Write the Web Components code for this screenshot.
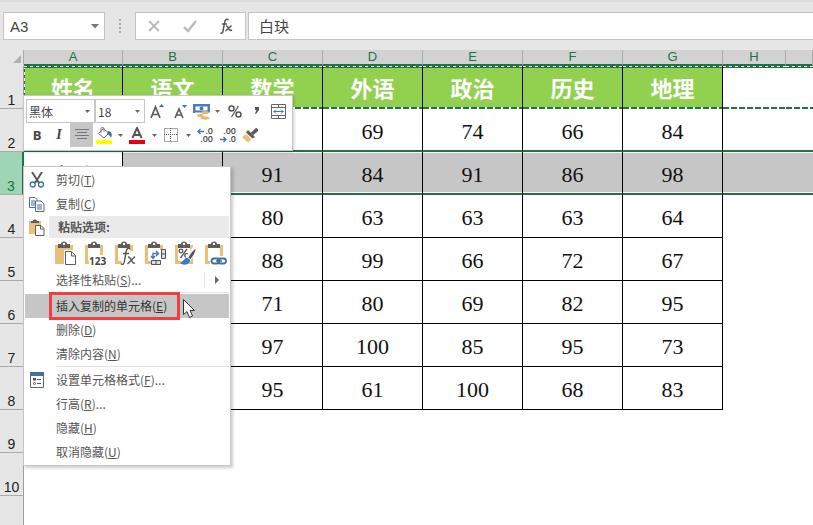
<!DOCTYPE html>
<html lang="zh-CN">
<head>
<meta charset="utf-8">
<title>成绩表</title>
<style>
  body { margin: 0; background: #fff; color: #222; font-family: "Liberation Sans", "Noto Sans CJK SC", sans-serif; }
</style>
</head>
<body>
<excel-window></excel-window>
<script>
const SVG = (w, h, body) => `<svg width="${w}" height="${h}" viewBox="0 0 ${w} ${h}" fill="none" aria-hidden="true">${body}</svg>`;
const BOARD = `<path d="M1 4h18v19H1z" fill="#e9bf7b"/><path d="M4 6h12v14H4z" fill="#fff"/><path d="M4 7V3h3c0-3.500 6-3.500 6 0h3v4z" fill="#5d5d5d"/><path d="M9 2h2v2H9z" fill="#fff"/>`;
const ICONS = {
  cross: SVG(14, 14, `<path d="M2 2l10 10M12 2L2 12" stroke="#b9b9b9" stroke-width="1.8"/>`),
  check: SVG(14, 14, `<path d="M1 8l4 4L13 2" stroke="#b9b9b9" stroke-width="2.2"/>`),
  fx: SVG(14, 18, `<path d="M8.500 3c-2-2-3.500 0-4 3L3 14c-.4 2-1 2.500-2.500 2M2 7h5" stroke="#555" stroke-width="1.500"/><path d="M6 9c3-1 2 6 6 4M11.500 8.500L5.500 14" stroke="#555" stroke-width="1.500"/>`),
  corner: SVG(8, 8, `<path d="M8 0v8H0z" fill="#b1b1b1"/>`),
  down: SVG(5, 3, `<path d="M0 0h5L2.500 3z" fill="#666"/>`),
  downBig: SVG(8, 5, `<path d="M0 0h8L4 4.500z" fill="#777"/>`),
  right: SVG(4, 8, `<path d="M0 0l4 4-4 4z" fill="#666"/>`),
  grow: SVG(14, 16, `<path d="M1 15L5.500 4 10 15M2.500 11.500h6" stroke="#5a5a5a" stroke-width="1.700"/><path d="M9 4l2.500-3L14 4z" fill="#3e6db5"/>`),
  shrink: SVG(13, 15, `<path d="M1 14l4-9 4 9M2.500 11h5" stroke="#5a5a5a" stroke-width="1.600"/><path d="M8 1h5l-2.500 3z" fill="#3e6db5"/>`),
  money: SVG(17, 17, `<path d="M0 1h17v9H0z" fill="#4a7ebb"/><path d="M2.500 3.500h12v4h-12z" fill="#fff"/><circle cx="8.500" cy="5.500" r="2" fill="#4a7ebb"/><path d="M2 9.500h15V17H2z" fill="#fff"/><g fill="#e9b973"><ellipse cx="12" cy="9.500" rx="4" ry="1.500"/><ellipse cx="7.500" cy="12.500" rx="3.500" ry="1.500"/><ellipse cx="12" cy="15" rx="4.500" ry="1.700"/></g>`),
  percent: SVG(14, 13, `<circle cx="3.500" cy="3.500" r="2.500" stroke="#555" stroke-width="1.500"/><circle cx="10.500" cy="9.500" r="2.500" stroke="#555" stroke-width="1.500"/><path d="M10.500 1l-7 11" stroke="#555" stroke-width="1.300"/>`),
  comma: SVG(6, 10, `<path d="M1 1h4v3L2 8l-1-.5L2.500 4H1z" fill="#555"/>`),
  merge: SVG(15, 15, `<path d="M.5.500h14v14H.5zM.5 3.500h14M.5 11.500h14M7.500.500v3M7.500 11.500v3" stroke="#666"/><path d="M2.500 7.500h10M5 5.500l-2 2 2 2M10 5.500l2 2-2 2" stroke="#3e7ab8"/>`),
  align: SVG(14, 12, `<path d="M0 .5h14M2 3.500h10M0 6.500h14M2 9.500h10" stroke="#777"/>`),
  bucket: SVG(17, 17, `<path d="M0 13h16v4H0z" fill="#ff0"/><path d="M7 2L2.500 6.500 8 11l5-5L7 1.500z" fill="#fff" stroke="#6b6b6b"/><path d="M5 6V1.500c0-1.500 3-1.500 3 0V5" stroke="#9c6b5c"/><path d="M12 4c4 0 4.500 4 3 7-1-2-2-3.500-4-4z" fill="#41719c"/>`),
  fontColor: SVG(16, 17, `<path d="M0 13h16v4H0z" fill="#e60012"/><path d="M3.500 11L8 1l4.500 10M5 8h6" stroke="#555" stroke-width="2"/>`),
  borders: SVG(14, 14, `<path d="M.5.500h13v13H.5zM6.500 0v14M0 6.500h14" stroke="#555" stroke-dasharray="1 1"/>`),
  decMore: SVG(16, 16, `<path d="M1 4.500h6M3.500 2L1 4.500 3.500 7" stroke="#3e7ab8" stroke-width="1.400"/>`),
  arrowLeft: SVG(7, 7, `<path d="M1 3.500h6M3.500 1L1 3.500 3.500 6" stroke="#3e7ab8" stroke-width="1.400"/>`),
  arrowRight: SVG(7, 7, `<path d="M0 3.500h6M3.500 1L6 3.500 3.500 6" stroke="#3e7ab8" stroke-width="1.400"/>`),
  painter: SVG(16, 15, `<path d="M15.500 1L10 6" stroke="#5a5a5a" stroke-width="3.500"/><path d="M6 2l7 7-2.500 1.500L4 4.500z" fill="#5a5a5a"/><path d="M4 6l5.500 5L6 14.500 0 9z" fill="#e9bf7b"/>`),
  cut: SVG(16, 17, `<path d="M3 0l7 11M13 0L6 11" stroke="#5a5a5a" stroke-width="2"/><circle cx="3.700" cy="12.500" r="2.500" stroke="#3e6f9f" stroke-width="1.300"/><circle cx="12" cy="12.500" r="2.500" stroke="#3e6f9f" stroke-width="1.300"/>`),
  copy: SVG(16, 15, `<path d="M.5.500H6l2 2v8H.5z" fill="#fff" stroke="#5a6b7c"/><path d="M2 4h4M2 6h4M2 8h4" stroke="#41719c"/><path d="M6.500 4H12l3 3v7.500H6.500z" fill="#fff" stroke="#5a6b7c"/><path d="M8 8h5M8 10h5M8 12h5" stroke="#41719c"/>`),
  paste: SVG(16, 17, `<path d="M0 2h12v13H0z" fill="#e9bf7b"/><path d="M2 4V2h2c0-2 4-2 4 0h2v2z" fill="#5d5d5d"/><path d="M6.500 6.500H12l3 3v7H6.500z" fill="#fff" stroke="#5d5d5d"/><path d="M11.500 7v3H15" stroke="#5d5d5d"/>`),
  format: SVG(15, 16, `<path d="M.5.500h13v15H.5z" fill="#fff" stroke="#55697d"/><path d="M0 0h14v4H0z" fill="#41719c"/><path d="M3 6h3v2.500H3z" fill="#555"/><path d="M7 7.500h4M7 11.500h4" stroke="#555"/><circle cx="4.500" cy="11.500" r="1" stroke="#555"/>`),
  pAll: SVG(24, 26, `<path d="M1 4h18v19H1z" fill="#e9bf7b"/><path d="M4 7V3h3c0-3.500 6-3.500 6 0h3v4z" fill="#5d5d5d"/><path d="M9 2h2v2H9z" fill="#fff"/><path d="M11.500 10.500h6l4 4v9h-10z" fill="#fff" stroke="#fff" stroke-width="3"/><path d="M11.500 10.500h6l4 4v9h-10z" fill="#fff" stroke="#5d5d5d"/><path d="M17.500 11v4H22" stroke="#5d5d5d"/>`),
  pValues: SVG(24, 26, BOARD + `<path d="M5 14h19v11H5z" fill="#fff"/><text x="5" y="24" font-family="Open Sans, sans-serif" font-size="10" font-weight="700" fill="#444">123</text>`),
  pFormula: SVG(24, 26, BOARD + `<path d="M8 10h16v15H8z" fill="#fff"/><path d="M16 8c-2-2-3.500 0-4 3l-1.500 9c-.5 3-1.500 4-3.500 3M9 12.500h6" stroke="#555" stroke-width="1.400"/><path d="M14 16c3.500-1 3 7.500 7 6M21 15.500L13.500 23" stroke="#555" stroke-width="1.400"/>`),
  pTranspose: SVG(24, 26, BOARD + `<path d="M7 9h16v15H7z" fill="#fff"/><path d="M17.500 8.500h4v9h-4zM17.500 13h4" fill="#ddd" stroke="#555"/><path d="M7.500 19.500h9v4h-9zM12 19.500v4" fill="#ddd" stroke="#555"/><path d="M9 17v-4.500h5M7 15l2 2.500 2-2.500M12 10l2.500 2.500L12 15" stroke="#3e7ab8" stroke-width="1.400"/>`),
  pFormat: SVG(24, 26, BOARD + `<circle cx="7" cy="10" r="1.800" stroke="#555" stroke-width="1.300"/><circle cx="12.500" cy="14.500" r="1.800" stroke="#555" stroke-width="1.300"/><path d="M13 8L6.500 17" stroke="#555" stroke-width="1.300"/><path d="M21 8l-7 10" stroke="#fff" stroke-width="6"/><path d="M21.500 8c-2 1-7 7-7 9l2 1c2-2 5-7 5-10z" fill="#555"/><path d="M14 17c-4-1-4 4-8 5 3 3 10 2 10-3z" fill="#3e7ab8"/>`),
  pLink: SVG(24, 26, BOARD + `<path d="M6 15h18v10H6z" fill="#fff"/><rect x="7.500" y="17.500" width="8" height="5" rx="2.500" stroke="#3e6f9f" stroke-width="1.800"/><rect x="14" y="17.500" width="8" height="5" rx="2.500" stroke="#3e6f9f" stroke-width="1.800"/><path d="M12 20h6" stroke="#3e6f9f" stroke-width="1.500"/>`),
  pointer: SVG(14, 21, `<path d="M1.500 1.500v15l3.500-3 2.500 6 3-1.500-2.500-5.500h4.500z" fill="#fff" stroke="#333"/>`)
};

const define = (name, html, setup) => customElements.define(name, class extends HTMLElement {
  constructor() {
    super();
    const t = document.createElement("template");
    t.innerHTML = html;
    this.attachShadow({ mode: "open" }).append(t.content.cloneNode(true));
  }
  connectedCallback() { if (setup) setup(this, this.shadowRoot); }
});

define("ui-icon", `<style>:host{display:inline-flex;flex:none}svg{display:block}</style><span></span>`,
  (el, root) => { root.querySelector("span").innerHTML = ICONS[el.getAttribute("name")]; });

define("formula-bar", `<style>
  :host{display:flex;align-items:stretch;box-sizing:border-box;height:50px;padding:12px 0 10px 3px;background:#e6e6e6;box-shadow:inset 0 2px #dcdcdc}
  .box{display:flex;align-items:center;box-sizing:border-box;background:#fff;border:1px solid #c4c4c4}
  input{min-width:0;flex:1;border:0;outline:0;padding:0 6px;background:none;font:15px "Noto Sans CJK SC",sans-serif;color:#444}
  button{display:flex;align-items:center;justify-content:center;border:0;background:none;padding:0}
  .name{width:102px}.name input{font:15px "Liberation Sans",sans-serif}.name button{width:18px}
  .dots{display:flex;flex-direction:column;justify-content:center;gap:2px;width:30px;align-items:center}
  .dots i{width:2px;height:2px;background:#aaa}
  .acts{width:111px;justify-content:space-around}.acts button{width:36px;height:100%}
  .value{flex:1;margin-left:2px;border-right:0}.value input{padding:0 10px;font-size:15px;line-height:20px;height:24px;margin-bottom:2px}
</style>
<div class="box name"><input aria-label="名称框" value="A3"><button aria-label="展开名称"><ui-icon name="downBig"></ui-icon></button></div>
<div class="dots"><i></i><i></i><i></i><i></i></div>
<div class="box acts"><button aria-label="取消"><ui-icon name="cross"></ui-icon></button><button aria-label="输入"><ui-icon name="check"></ui-icon></button><button aria-label="插入函数"><ui-icon name="fx"></ui-icon></button></div>
<div class="box value"><input aria-label="编辑栏" value="白玦"></div>`);

define("sheet-grid", `<style>
  :host{display:flex;flex-direction:column;flex:1;overflow:hidden}
  table{width:100%;table-layout:fixed;border-collapse:separate;border-spacing:0}
  .rowhead{width:24px}.first{width:99px}.col{width:100px}.narrow{width:63px}
  th,td{box-sizing:border-box;padding:0;font-weight:400}
  thead th{height:16px;background:#d2d2d2;border-right:1px solid #ababab;border-bottom:2px solid #217346;color:#217346;font:13px/14px "Liberation Sans",sans-serif}
  thead th:first-child{background:#e6e6e6;border-bottom-color:#e6e6e6}
  thead ui-icon{float:right;margin:4px 2px 0 0}
  tbody th{height:43px;vertical-align:bottom;background:#e6e6e6;border-right:1px solid #9c9c9c;border-bottom:1px solid #ababab;color:#222;font:14px/16px "Liberation Sans",sans-serif}
  td{text-align:center;vertical-align:middle;font:22px/24px "Liberation Serif","Noto Sans CJK SC",serif;color:#111}
  td.cell{border-right:1px solid #000;border-bottom:1px solid #000;padding-top:4px}
  .title td{--side:linear-gradient(#0000,#0000);border-bottom:0;background:repeating-linear-gradient(90deg,#fff 0 3px,#217346 3px 6px) top/100% 1px no-repeat,linear-gradient(#217346,#217346) 0 1px/100% 1px no-repeat,repeating-linear-gradient(90deg,#217346 0 6px,#fff 6px 8px) bottom/100% 2px no-repeat,var(--side) left/1px 100% no-repeat}
  .title td.cell{border-bottom:0;background-color:#92d050;color:#fff;font-weight:700;font-family:"Noto Sans CJK SC",sans-serif;padding:0 0 2px}
  .title td:nth-child(2){--side:repeating-linear-gradient(#fff 0 3px,#217346 3px 6px)}
  .title th{border-bottom-color:#ababab}
  .before td,.before td.cell{border-bottom:2px solid #217346}
  .active th{background:#9fd5b7;color:#217346;border-right:2px solid #217346}
  .active td,.active td.cell{background:linear-gradient(#fff,#fff) top/100% 1px no-repeat,linear-gradient(#fff,#fff) bottom/100% 1px no-repeat #c6c6c6;background-clip:padding-box;background-origin:padding-box;border-bottom:2px solid #217346}
  .active td.current{background:#fff;padding-top:8px}
  .rest{flex:1;width:23px;background:#e6e6e6;border-right:1px solid #9c9c9c}
</style><table><colgroup><col class="rowhead"><col class="first"><col class="col"><col class="col"><col class="col"><col class="col"><col class="col"><col class="col"><col class="narrow"><col></colgroup>
<thead><tr><th><ui-icon name="corner"></ui-icon></th><th>A</th><th>B</th><th>C</th><th>D</th><th>E</th><th>F</th><th>G</th><th>H</th><th></th></tr></thead><tbody></tbody></table><div class="rest"></div>`,
(el, root) => {
  const rows = [["姓名","语文","数学","外语","政治","历史","地理"],["","","",69,74,66,84],["白玦","",91,84,91,86,98],["","",80,63,63,63,64],["","",88,99,66,72,67],["","",71,80,69,82,95],["","",97,100,85,95,73],["","",95,61,100,68,83],[],[]];
  const kinds = ["title", "before", "active"];
  root.querySelector("tbody").innerHTML = rows.map((r, i) => `<tr class="${kinds[i] || ""}"><th>${i + 1}</th>` +
    Array.from({ length: 9 }, (_, c) => `<td class="${c < r.length ? "cell" : ""}${i === 2 && c === 0 ? " current" : ""}">${r[c] ?? ""}</td>`).join("") + "</tr>").join("");
});

define("tool-button", `<style>:host{display:flex;height:24px}button{display:flex;align-items:center;justify-content:center;width:100%;border:0;padding:0;background:none;color:#444;font:bold 13px/14px "Open Sans",sans-serif}:host([pressed]) button{background:#c6c6c6}</style><button><slot></slot></button>`,
(el, root) => root.querySelector("button").setAttribute("aria-label", el.getAttribute("label")));

define("mini-toolbar", `<style>
  :host{display:block;box-sizing:border-box;width:270px;padding:3px 2px;background:#fff;border:1px solid #c6c6c6;box-shadow:1px 1px 3px #0003}
  .row{display:grid;align-items:center;height:24px}
  .one{grid-template-columns:69px 50px 24px 22px 20px 12px 24px 20px 22px}
  .two{grid-template-columns:22px 22px 23px 22px 10px 24px 10px 24px 10px 24px 22px 22px}
  label{position:relative;display:flex;align-items:center}
  select{appearance:none;width:100%;height:24px;border:1px solid #c6c6c6;border-radius:0;background:#fff;padding:0 2px;color:#444;font:12px "Noto Sans CJK SC",sans-serif}
  label ui-icon{position:absolute;right:5px}
  i{font-family:"Liberation Serif",serif;font-size:14px}
  .dec{display:grid;grid-template-columns:8px 8px;align-items:center;font:600 9px/8px "Open Sans",sans-serif;text-align:right}.wide{grid-column:span 2}
</style>
<div class="row one"><label><select aria-label="字体"><option>黑体</option></select><ui-icon name="down"></ui-icon></label><label><select aria-label="字号"><option>18</option></select><ui-icon name="down"></ui-icon></label>
<tool-button label="增大字号"><ui-icon name="grow"></ui-icon></tool-button><tool-button label="减小字号"><ui-icon name="shrink"></ui-icon></tool-button><tool-button label="会计数字格式"><ui-icon name="money"></ui-icon></tool-button><tool-button label="更多货币"><ui-icon name="down"></ui-icon></tool-button><tool-button label="百分比"><ui-icon name="percent"></ui-icon></tool-button><tool-button label="千位分隔"><ui-icon name="comma"></ui-icon></tool-button><tool-button label="合并后居中"><ui-icon name="merge"></ui-icon></tool-button></div>
<div class="row two"><tool-button label="加粗">B</tool-button><tool-button label="倾斜"><i>I</i></tool-button><tool-button pressed label="居中"><ui-icon name="align"></ui-icon></tool-button><tool-button label="填充颜色"><ui-icon name="bucket"></ui-icon></tool-button><tool-button label="更多填充"><ui-icon name="down"></ui-icon></tool-button><tool-button label="字体颜色"><ui-icon name="fontColor"></ui-icon></tool-button><tool-button label="更多颜色"><ui-icon name="down"></ui-icon></tool-button><tool-button label="边框"><ui-icon name="borders"></ui-icon></tool-button><tool-button label="更多边框"><ui-icon name="down"></ui-icon></tool-button><tool-button label="增加小数位数"><span class="dec"><ui-icon name="arrowLeft"></ui-icon><span>.0</span><span class="wide">.00</span></span></tool-button><tool-button label="减少小数位数"><span class="dec"><span class="wide">.00</span><ui-icon name="arrowRight"></ui-icon><span>.0</span></span></tool-button><tool-button label="格式刷"><ui-icon name="painter"></ui-icon></tool-button></div>`);

define("menu-item", `<style>
  :host{display:block}
  button{display:grid;grid-template-columns:24px 1fr auto;align-items:center;width:100%;height:24px;padding:0;border:0;background:none;color:#555;text-align:left;font:12px/18px "Noto Sans CJK SC",sans-serif}
  .icon{display:flex;justify-content:center}
  .label{padding-left:7px}
  :host([hot]) button{background:#c6c6c6;color:#333}
  .more{display:none;align-items:center;height:14px;padding:0 10px;border-left:1px solid #e0e0e0}
  :host([submenu]) .more{display:flex}
</style><button role="menuitem"><span class="icon"><slot name="icon"></slot></span><span class="label"><slot></slot></span><span class="more"><ui-icon name="right"></ui-icon></span></button>`);

define("context-menu", `<style>
  :host{display:block;box-sizing:border-box;width:208px;padding:1px;background:#fff;border:1px solid #c6c6c6;box-shadow:2px 2px 3px #0003}
  hr{height:1px;border:0;background:#e0e0e0;margin:0 0 1px 31px}
  .head{display:grid;grid-template-columns:24px 1fr;height:22px;align-items:center}
  .head ui-icon{justify-content:center}
  .head b{height:22px;padding-left:9px;background:#eaeaea;color:#555;font:bold 12px/22px "Noto Sans CJK SC",sans-serif}
  .paste{display:flex;gap:6px;height:30px;align-items:center;padding:2px 0 0 29px;box-sizing:border-box}
  .paste button{display:flex;width:24px;height:26px;padding:0;border:0;background:none}
  .hot{position:relative}
  .frame{position:absolute;left:24px;top:-2px;width:125px;height:22px;border:3px solid #ee4040}
  .pointer{position:absolute;left:157px;top:4px}
</style>
<div role="menu">
<menu-item><ui-icon slot="icon" name="cut"></ui-icon>剪切(<u>T</u>)</menu-item>
<menu-item><ui-icon slot="icon" name="copy"></ui-icon>复制(<u>C</u>)</menu-item>
<div class="head"><ui-icon name="paste"></ui-icon><b>粘贴选项:</b></div>
<div class="paste"><button aria-label="粘贴"><ui-icon name="pAll"></ui-icon></button><button aria-label="值"><ui-icon name="pValues"></ui-icon></button><button aria-label="公式"><ui-icon name="pFormula"></ui-icon></button><button aria-label="转置"><ui-icon name="pTranspose"></ui-icon></button><button aria-label="格式"><ui-icon name="pFormat"></ui-icon></button><button aria-label="粘贴链接"><ui-icon name="pLink"></ui-icon></button></div>
<menu-item submenu>选择性粘贴(<u>S</u>)...</menu-item>
<hr>
<div class="hot"><menu-item hot>插入复制的单元格(<u>E</u>)</menu-item><span class="frame"></span><ui-icon class="pointer" name="pointer"></ui-icon></div>
<menu-item>删除(<u>D</u>)</menu-item>
<menu-item>清除内容(<u>N</u>)</menu-item>
<hr>
<menu-item><ui-icon slot="icon" name="format"></ui-icon>设置单元格格式(<u>F</u>)...</menu-item>
<menu-item>行高(<u>R</u>)...</menu-item>
<menu-item>隐藏(<u>H</u>)</menu-item>
<menu-item>取消隐藏(<u>U</u>)</menu-item>
</div>`);

define("excel-window", `<style>
  :host{display:flex;flex-direction:column;position:relative;height:100vh;overflow:hidden}
  mini-toolbar{position:absolute;left:23px;top:95px}
  context-menu{position:absolute;left:23px;top:166px}
</style><formula-bar></formula-bar><sheet-grid></sheet-grid><mini-toolbar></mini-toolbar><context-menu></context-menu>`);
</script>
</body>
</html>
